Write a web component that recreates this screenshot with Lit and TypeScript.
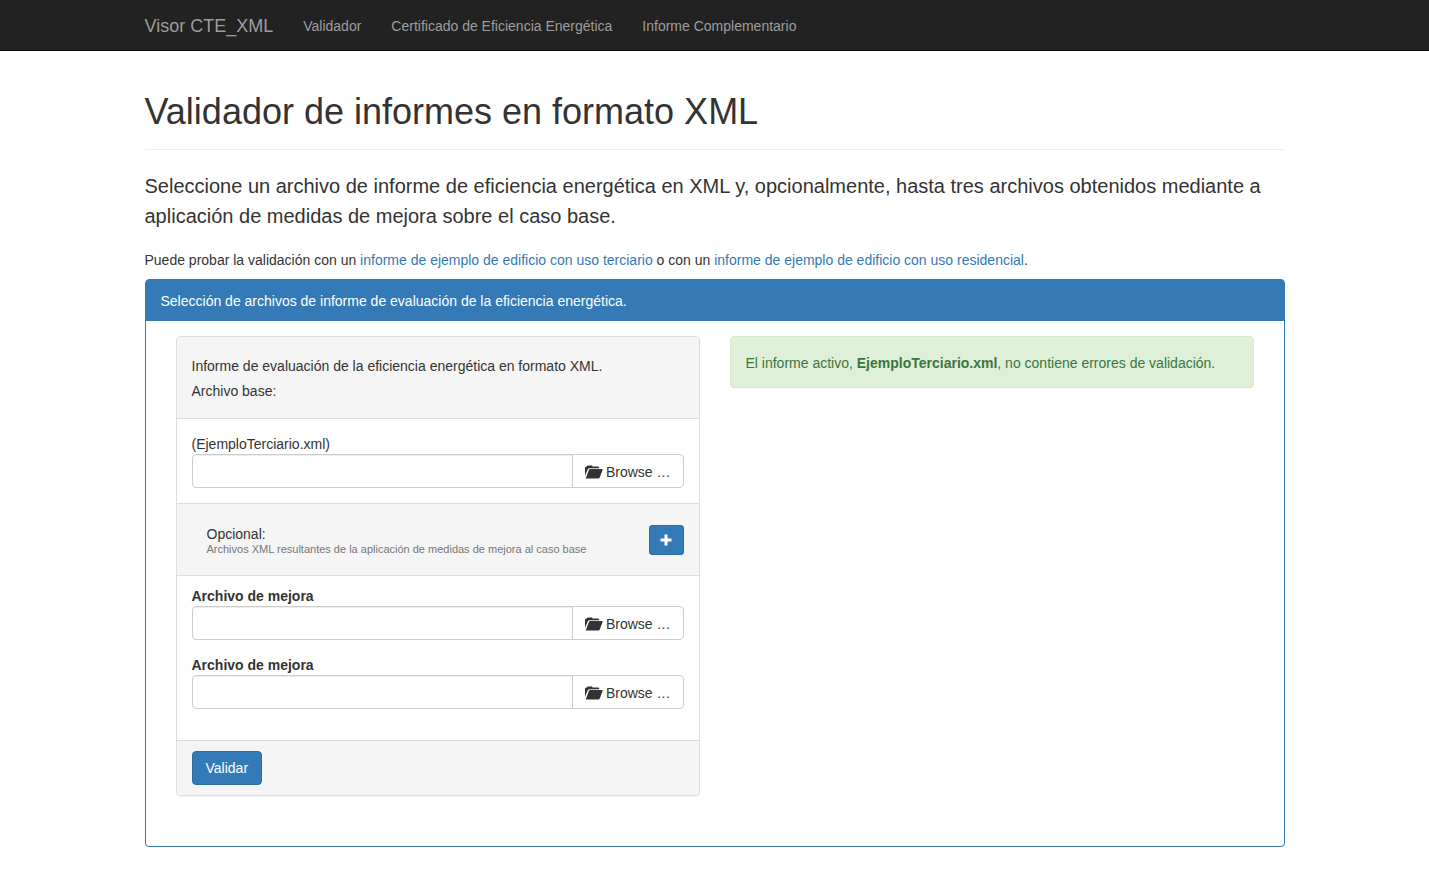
import { LitElement, html, css } from "lit";
import { customElement, property, state } from "lit/decorators.js";

@customElement("file-picker")
export class FilePicker extends LitElement {
  @property() name = "";
  @property() label = "";
  @property({ type: Boolean }) strong = false;
  @state() private caption = "";

  static styles = css`
    * { box-sizing: border-box; }
    :host { display: block; }
    .label { display: block; line-height: 19px; }
    .label.strong { font-weight: 700; }
    .group { display: flex; }
    .text {
      flex: 1;
      min-width: 0;
      height: 34px;
      padding: 6px 12px;
      font: inherit;
      color: #555;
      background: #fff;
      border: 1px solid #ccc;
      border-radius: 4px 0 0 4px;
      box-shadow: inset 0 1px 1px rgba(0, 0, 0, 0.075);
    }
    .browse {
      display: flex;
      align-items: center;
      gap: 3px;
      height: 34px;
      margin-left: -1px;
      padding: 1px 12px 0;
      font: inherit;
      color: #333;
      white-space: nowrap;
      background: #fff;
      border: 1px solid #ccc;
      border-radius: 0 4px 4px 0;
      cursor: pointer;
    }
    .icon { width: 18px; height: 14px; fill: #333; }
  `;

  private pick() {
    const input = document.createElement("input");
    input.type = "file";
    input.accept = ".xml";
    input.onchange = () => (this.caption = input.files?.[0]?.name ?? "");
    input.click();
  }

  render() {
    return html`
      <label class=${this.strong ? "label strong" : "label"} for="file">${this.label}</label>
      <div class="group">
        <input id="file" class="text" type="text" readonly name=${this.name} .value=${this.caption} />
        <button class="browse" type="button" @click=${this.pick}>
          <svg class="icon" viewBox="0 0 18 14" aria-hidden="true">
            <path d="M0 10.8V2.6L1 1.4H1.9L2.6 0.5H7L7.7 1.4H13.4L14.2 2.2V3.2H4.6Q3.3 3.2 2.8 4.2Z" />
            <path d="M0.7 13.4L3.9 5.1Q4.2 4.1 5.2 4.1H17.2Q17.9 4.1 17.6 4.9L14.8 12.6Q14.4 13.4 13.6 13.4Z" />
          </svg>
          <span>Browse …</span>
        </button>
      </div>
    `;
  }
}

@customElement("app-root")
export class AppRoot extends LitElement {
  static styles = css`
    * { box-sizing: border-box; }
    :host {
      display: block;
      font: 14px/20px "Liberation Sans", Arial, sans-serif;
      color: #333;
    }
    a { color: #337ab7; text-decoration: none; }
    p, h1 { margin: 0; }
    .navbar { background: #222; border-bottom: 1px solid #080808; }
    .container { max-width: 1170px; margin: 0 auto; padding: 0 15px; }
    .nav { display: flex; align-items: center; height: 50px; padding-top: 2px; }
    .nav a { padding: 0 15px; color: #9d9d9d; }
    .nav .brand { padding-left: 0; font-size: 18px; }
    .title {
      margin: 41px 0 21px;
      padding-bottom: 17px;
      border-bottom: 1px solid #eee;
      font-size: 36px;
      line-height: 40px;
      font-weight: 500;
    }
    .lead { margin-bottom: 19px; font-size: 20px; line-height: 30px; }
    .hint { margin-bottom: 9px; }
    .panel { border: 1px solid #337ab7; border-radius: 4px; box-shadow: 0 1px 1px rgba(0, 0, 0, 0.05); }
    .panel-head { padding: 11px 15px 10px; color: #fff; background: #337ab7; border-radius: 2px 2px 0 0; }
    .panel-body { display: grid; grid-template-columns: 1fr 1fr; gap: 30px; align-items: start; padding: 15px 30px 50px; }
    .form { border: 1px solid #ddd; border-radius: 4px; box-shadow: 0 1px 1px rgba(0, 0, 0, 0.05); overflow: hidden; }
    .form-head { padding: 17px 15px 14px; line-height: 25px; background: #f5f5f5; border-bottom: 1px solid #ddd; }
    .base { padding: 16px 15px 15px; }
    .optional {
      display: flex;
      justify-content: space-between;
      align-items: center;
      padding: 20px 15px 20px 30px;
      background: #f5f5f5;
      border: solid #ddd;
      border-width: 1px 0;
    }
    .small { font-size: 11px; line-height: 11px; color: #777; }
    .add {
      display: grid;
      place-items: center;
      width: 35px;
      height: 30px;
      padding: 0;
      color: #fff;
      background: #337ab7;
      border: 1px solid #2e6da4;
      border-radius: 3px;
    }
    .add svg { width: 12px; height: 12px; fill: #fff; }
    .extra { display: grid; gap: 16px; padding: 11px 15px 31px; }
    .foot { padding: 10px 15px; background: #f5f5f5; border-top: 1px solid #ddd; }
    .submit {
      display: block;
      height: 34px;
      padding: 0 13px;
      font: inherit;
      color: #fff;
      background: #337ab7;
      border: 1px solid #2e6da4;
      border-radius: 4px;
    }
    .alert { padding: 16px 15px 14px; color: #3c763d; background: #dff0d8; border: 1px solid #d6e9c6; border-radius: 4px; }
  `;

  render() {
    return html`
      <header class="navbar">
        <nav class="container nav">
          <a class="brand" href="#">Visor CTE_XML</a>
          <a href="#validador">Validador</a>
          <a href="#certificado">Certificado de Eficiencia Energética</a>
          <a href="#informe">Informe Complementario</a>
        </nav>
      </header>
      <main class="container">
        <h1 class="title">Validador de informes en formato XML</h1>
        <p class="lead">Seleccione un archivo de informe de eficiencia energética en XML y, opcionalmente, hasta tres archivos obtenidos mediante a aplicación de medidas de mejora sobre el caso base.</p>
        <p class="hint">Puede probar la validación con un <a href="#terciario">informe de ejemplo de edificio con uso terciario</a> o con un <a href="#residencial">informe de ejemplo de edificio con uso residencial</a>.</p>
        <section class="panel">
          <div class="panel-head">Selección de archivos de informe de evaluación de la eficiencia energética.</div>
          <div class="panel-body">
            <form class="form" @submit=${(e: Event) => e.preventDefault()}>
              <div class="form-head">
                <p>Informe de evaluación de la eficiencia energética en formato XML.</p>
                <p>Archivo base:</p>
              </div>
              <div class="base">
                <file-picker name="base" label="(EjemploTerciario.xml)"></file-picker>
              </div>
              <div class="optional">
                <div>
                  <p>Opcional:</p>
                  <p class="small">Archivos XML resultantes de la aplicación de medidas de mejora al caso base</p>
                </div>
                <button class="add" type="button" aria-label="Añadir archivo">
                  <svg viewBox="0 0 12 12" aria-hidden="true"><path d="M4.5 0.5h3v4h4v3h-4v4h-3v-4h-4v-3h4z" /></svg>
                </button>
              </div>
              <div class="extra">
                ${[1, 2].map((n) => html`<file-picker strong name=${`mejora${n}`} label="Archivo de mejora"></file-picker>`)}
              </div>
              <div class="foot"><button class="submit" type="submit">Validar</button></div>
            </form>
            <div class="alert" role="status">El informe activo, <strong>EjemploTerciario.xml</strong>, no contiene errores de validación.</div>
          </div>
        </section>
      </main>
    `;
  }
}
